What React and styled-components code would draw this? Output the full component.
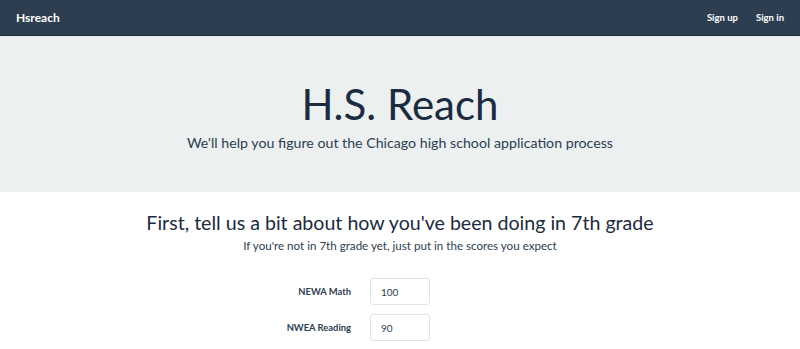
import React from "react";
import styled, { createGlobalStyle } from "styled-components";

const Global = createGlobalStyle`
  html, body { margin: 0; padding: 0; background: #fff; }
  body { font-family: Lato, "Open Sans", sans-serif; color: #2c3e50; }
  * { box-sizing: border-box; }
`;

const NavBar = styled.nav`
  height: 36px;
  background: #2c3e50;
  border-bottom: 1px solid #1f2d3b;
  display: flex;
  align-items: center;
  justify-content: space-between;
  padding: 0 16px 0 16px;
`;

const Brand = styled.a`
  color: #fff;
  font-weight: 700;
  font-size: 12px;
  text-decoration: none;
  margin-top: -1px;
`;

const NavLinks = styled.div`
  display: flex;
  gap: 18px;
`;

const NavLink = styled.a`
  color: #fff;
  font-weight: 700;
  font-size: 9.5px;
  text-decoration: none;
  margin-top: -1px;
`;

const Jumbotron = styled.header`
  background: #ecf0f1;
  height: 156px;
  display: flex;
  flex-direction: column;
  align-items: center;
  padding-top: 44px;
`;

const Title = styled.h1`
  margin: 0;
  font-size: 42px;
  font-weight: 400;
  line-height: 48px;
  color: #1b2b40;
`;

const Lead = styled.p`
  margin: 5px 0 0;
  font-size: 14.2px;
  font-weight: 400;
  line-height: 20px;
  color: #2c3e50;
`;

const Section = styled.section`
  display: flex;
  flex-direction: column;
  align-items: center;
  padding-top: 18px;
`;

const Heading = styled.h2`
  margin: 0;
  font-size: 19.6px;
  font-weight: 400;
  line-height: 26px;
  color: #1b2b40;
`;

const Sub = styled.p`
  margin: 2px 0 0;
  font-size: 11.6px;
  line-height: 16px;
  color: #2c3e50;
`;

const Form = styled.form`
  margin-top: 24px;
  display: grid;
  grid-template-columns: 351px 60px;
  column-gap: 19px;
  row-gap: 9px;
  width: 800px;
`;

const Label = styled.label`
  justify-self: end;
  align-self: center;
  font-size: 9.4px;
  font-weight: 700;
  color: #2c3e50;
`;

const Input = styled.input`
  width: 60px;
  height: 27px;
  border: 1px solid #dce4ec;
  border-radius: 3px;
  padding: 0 10px;
  font-family: Lato, sans-serif;
  font-size: 10px;
  color: #2c3e50;
  background: #fff;
  outline: none;
`;

export default function App() {
  return (
    <>
      <Global />
      <NavBar>
        <Brand href="#">Hsreach</Brand>
        <NavLinks>
          <NavLink href="#">Sign up</NavLink>
          <NavLink href="#">Sign in</NavLink>
        </NavLinks>
      </NavBar>
      <Jumbotron>
        <Title>H.S. Reach</Title>
        <Lead>We'll help you figure out the Chicago high school application process</Lead>
      </Jumbotron>
      <Section>
        <Heading>First, tell us a bit about how you've been doing in 7th grade</Heading>
        <Sub>If you're not in 7th grade yet, just put in the scores you expect</Sub>
        <Form>
          <Label htmlFor="math">NEWA Math</Label>
          <Input id="math" defaultValue="100" />
          <Label htmlFor="reading">NWEA Reading</Label>
          <Input id="reading" defaultValue="90" />
        </Form>
      </Section>
    </>
  );
}
